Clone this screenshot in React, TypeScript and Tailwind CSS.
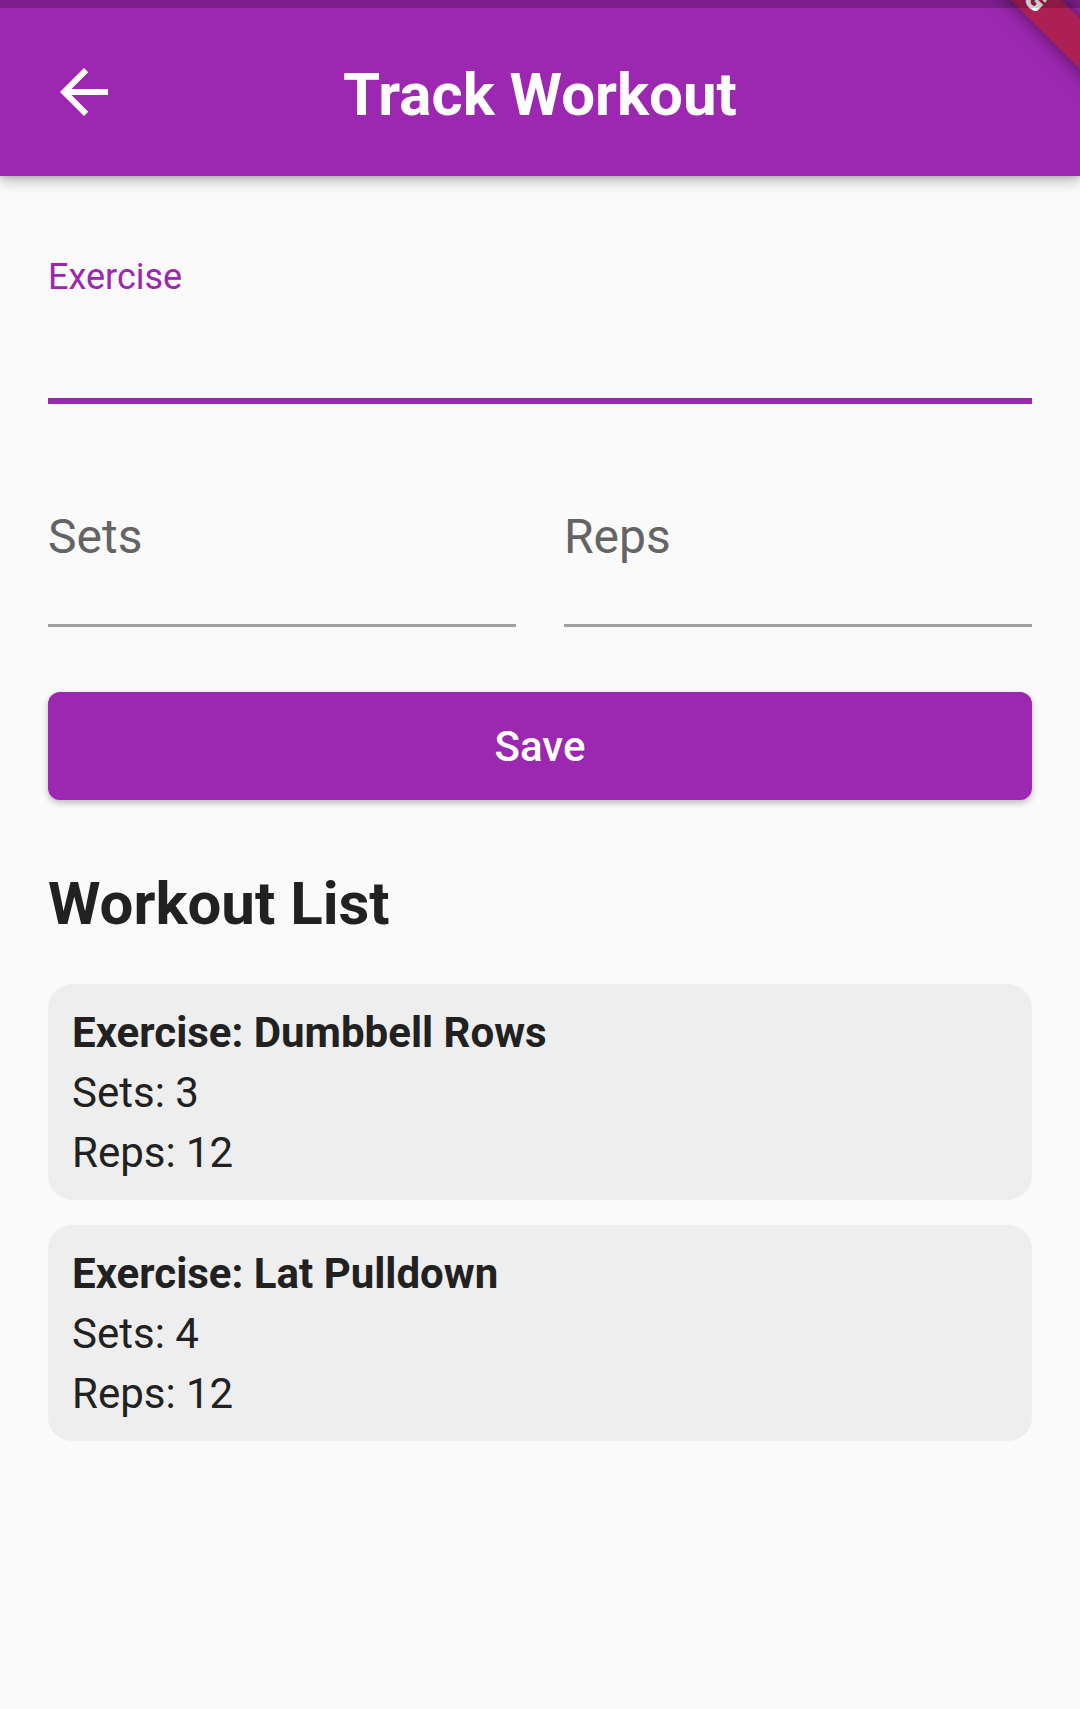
import React from 'react';

const workouts = [
  { exercise: 'Dumbbell Rows', sets: 3, reps: 12 },
  { exercise: 'Lat Pulldown', sets: 4, reps: 12 },
];

function BackArrow() {
  return (
    <svg width="72" height="72" viewBox="0 0 24 24" fill="#ffffff">
      <path d="M20 11H7.83l5.59-5.59L12 4l-8 8 8 8 1.41-1.41L7.83 13H20v-2z" />
    </svg>
  );
}

export default function App() {
  return (
    <div className="relative min-h-screen overflow-hidden bg-[#fafafa] font-['Roboto',sans-serif] text-[#212121]">
      {/* status bar tint */}
      <div className="absolute inset-x-0 top-0 z-30 h-[8px] bg-black/20" />

      {/* debug banner */}
      <div className="absolute left-[809px] top-[-45px] z-20 flex h-[36px] w-[400px] rotate-45 items-center justify-center bg-[#b71c1ca0] shadow-[0_0_18px_rgba(0,0,0,0.5)]">
        <span className="text-[30px] font-black leading-none text-white">DEBUG</span>
      </div>

      {/* App bar */}
      <header className="relative z-10 grid h-[176px] grid-cols-[120px_1fr_120px] items-center bg-[#9c27b0] pt-[8px] shadow-[0_6px_12px_rgba(0,0,0,0.22),0_2px_4px_rgba(0,0,0,0.12)]">
        <div className="pl-[48px]">
          <BackArrow />
        </div>
        <h1 className="mt-[6px] text-center text-[60px] font-bold leading-[70px] text-white">Track Workout</h1>
        <div />
      </header>

      <main className="px-[48px] pt-[48px]">
        {/* Exercise field (focused) */}
        <div className="border-b-[6px] border-[#9c27b0] pt-[32px]">
          <div className="text-[36px] leading-[42px] text-[#9c27b0]">Exercise</div>
          <div className="h-[100px]" />
        </div>

        {/* Sets / Reps */}
        <div className="mt-[48px] grid grid-cols-2 gap-[48px]">
          {['Sets', 'Reps'].map((label) => (
            <div key={label} className="border-b-[3px] border-[#a0a0a0] pt-[57px]">
              <div className="text-[48px] leading-[56px] text-[#646464]">{label}</div>
              <div className="h-[59px]" />
            </div>
          ))}
        </div>

        {/* Save button */}
        <button className="mt-[65px] flex h-[108px] w-full items-center justify-center rounded-[12px] bg-[#9c27b0] text-[42px] font-medium text-white shadow-[0_3px_6px_rgba(0,0,0,0.25)]">
          Save
        </button>

        <h2 className="mt-[69px] text-[60px] font-bold leading-[70px] text-[#212121]">Workout List</h2>

        {/* Workout cards */}
        <div className="mt-[45px] flex flex-col gap-[25px]">
          {workouts.map((w) => (
            <div key={w.exercise} className="flex flex-col gap-[11px] rounded-[24px] bg-[#eeeeee] px-[24px] pb-[23px] pt-[24px] text-[42px] leading-[49px]">
              <div className="font-bold">Exercise: {w.exercise}</div>
              <div>Sets: {w.sets}</div>
              <div>Reps: {w.reps}</div>
            </div>
          ))}
        </div>
      </main>
    </div>
  );
}
